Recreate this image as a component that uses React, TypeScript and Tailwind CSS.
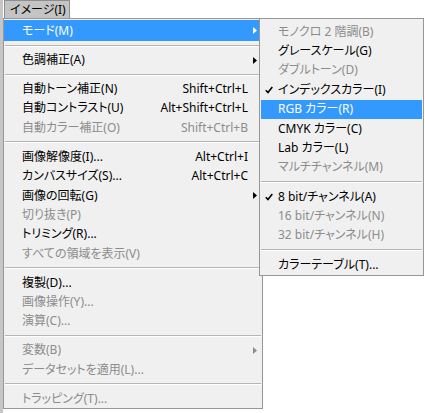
import React from 'react';

type Item =
  | 'sep'
  | {
      label: string;
      sc?: string;
      arrow?: boolean;
      disabled?: boolean;
      active?: boolean;
      checked?: boolean;
    };

const mainItems: Item[] = [
  { label: 'モード(M)', arrow: true, active: true },
  'sep',
  { label: '色調補正(A)', arrow: true },
  'sep',
  { label: '自動トーン補正(N)', sc: 'Shift+Ctrl+L' },
  { label: '自動コントラスト(U)', sc: 'Alt+Shift+Ctrl+L' },
  { label: '自動カラー補正(O)', sc: 'Shift+Ctrl+B', disabled: true },
  'sep',
  { label: '画像解像度(I)...', sc: 'Alt+Ctrl+I' },
  { label: 'カンバスサイズ(S)...', sc: 'Alt+Ctrl+C' },
  { label: '画像の回転(G)', arrow: true },
  { label: '切り抜き(P)', disabled: true },
  { label: 'トリミング(R)...' },
  { label: 'すべての領域を表示(V)', disabled: true },
  'sep',
  { label: '複製(D)...' },
  { label: '画像操作(Y)...', disabled: true },
  { label: '演算(C)...', disabled: true },
  'sep',
  { label: '変数(B)', arrow: true, disabled: true },
  { label: 'データセットを適用(L)...', disabled: true },
  'sep',
  { label: 'トラッピング(T)...', disabled: true },
];

const modeItems: Item[] = [
  { label: 'モノクロ 2 階調(B)', disabled: true },
  { label: 'グレースケール(G)' },
  { label: 'ダブルトーン(D)', disabled: true },
  { label: 'インデックスカラー(I)', checked: true },
  { label: 'RGB カラー(R)', active: true },
  { label: 'CMYK カラー(C)' },
  { label: 'Lab カラー(L)' },
  { label: 'マルチチャンネル(M)', disabled: true },
  'sep',
  { label: '8 bit/チャンネル(A)', checked: true },
  { label: '16 bit/チャンネル(N)', disabled: true },
  { label: '32 bit/チャンネル(H)', disabled: true },
  'sep',
  { label: 'カラーテーブル(T)...' },
];

function Separator() {
  return (
    <div className="h-[9.5px] flex items-center mx-[1px]">
      <div className="w-full border-t border-t-[#b5b5b5] border-b border-b-white" />
    </div>
  );
}

function Arrow({ color }: { color: string }) {
  return (
    <svg width="4" height="7" viewBox="0 0 4 7">
      <path d="M0 0 L4 3.5 L0 7 Z" fill={color} />
    </svg>
  );
}

function Check() {
  return (
    <svg width="8" height="8" viewBox="0 0 8 8">
      <path d="M0.8 4.2 L3 6.6 L7.3 1" stroke="#000" strokeWidth="1.6" fill="none" />
    </svg>
  );
}

function textColor(it: { disabled?: boolean; active?: boolean }) {
  if (it.active) return 'text-white';
  if (it.disabled) return 'text-[#8c8c8c]';
  return 'text-black';
}

export default function App() {
  return (
    <div
      className="relative w-[425px] h-[413px] bg-white overflow-hidden text-[12px] leading-none [font-feature-settings:'palt']"
      style={{ fontFamily: '"Noto Sans", "Noto Sans CJK JP", sans-serif' }}
    >
      <div className="flex h-full">
        <div className="w-[3px] h-full bg-[#c6c6c6]" />
        <div className="flex flex-col">
          <div className="h-[18px] w-[66px] ml-[1px] bg-[#c4c4c4] border border-[#8e8e8e] border-b-0 flex items-center pl-[5px] text-black">
            イメージ(I)
          </div>
          <div className="w-[260px] h-[391px] bg-[#f0f0f0] border border-[#979797] pt-[1px]">
            {mainItems.map((it, i) =>
              it === 'sep' ? (
                <Separator key={i} />
              ) : (
                <div
                  key={i}
                  className={`flex items-center pl-[18px] ${it.active ? 'h-[21px] bg-[#3399ff]' : 'h-[19.4px]'} ${textColor(it)}`}
                >
                  <span className="flex-1">{it.label}</span>
                  {it.sc && <span>{it.sc}</span>}
                  <div className="w-[14px] pl-[5px] flex items-center">
                    {it.arrow && (
                      <Arrow color={it.active ? '#ffffff' : it.disabled ? '#8c8c8c' : '#000000'} />
                    )}
                  </div>
                </div>
              )
            )}
          </div>
        </div>
      </div>

      <div className="absolute left-[259px] top-[18px] w-[165px] bg-[#f0f0f0] border border-[#979797] pt-[3px] pb-[1px] px-[1px]">
        {modeItems.map((it, i) =>
          it === 'sep' ? (
            <div key={i} className="h-[9.8px] flex items-center">
              <div className="w-full border-t border-t-[#b5b5b5] border-b border-b-white" />
            </div>
          ) : (
            <div
              key={i}
              className={`flex items-center h-[19.4px] ${it.active ? 'bg-[#3399ff]' : ''} ${textColor(it)}`}
            >
              <div className="w-[17px] flex justify-center pr-[1px]">{it.checked && <Check />}</div>
              <span>{it.label}</span>
            </div>
          )
        )}
      </div>
    </div>
  );
}
